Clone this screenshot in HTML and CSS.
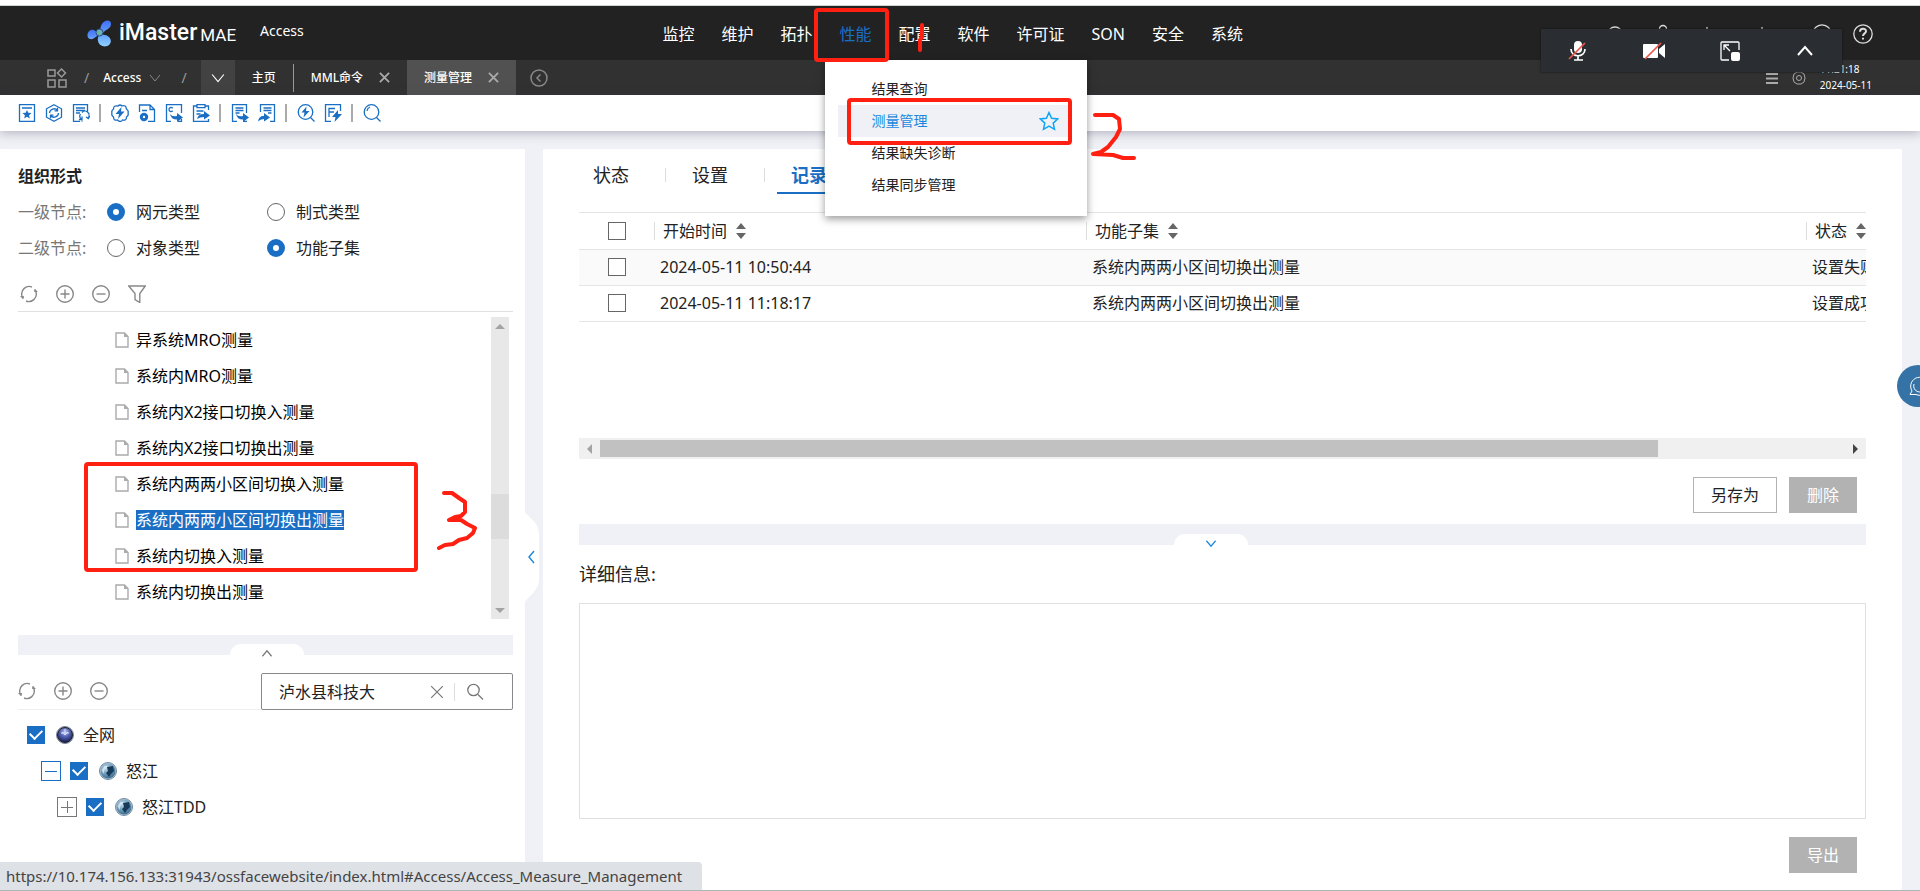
FILE: index.html
```html
<!DOCTYPE html>
<html lang="zh-CN">
<head>
<meta charset="utf-8">
<title>iMaster MAE Access</title>
<link rel="stylesheet" href="styles.css">
</head>
<body>
<svg class="defs" aria-hidden="true">
  <defs>
    <linearGradient id="bladeA" x1="0" y1="0" x2="0" y2="1"><stop offset="0" stop-color="#3f6ff5"/><stop offset="1" stop-color="#6aa2fb"/></linearGradient>
    <linearGradient id="bladeB" x1="0" y1="0" x2="0" y2="1"><stop offset="0" stop-color="#5d97f8"/><stop offset="1" stop-color="#8fd0ff"/></linearGradient>
    <radialGradient id="globeA" cx=".5" cy=".3" r=".7"><stop offset="0" stop-color="#b9c3ec"/><stop offset=".45" stop-color="#5664b4"/><stop offset="1" stop-color="#141b52"/></radialGradient>
    <radialGradient id="globeB" cx=".4" cy=".3" r=".8"><stop offset="0" stop-color="#c4dbea"/><stop offset=".5" stop-color="#6d9cbc"/><stop offset="1" stop-color="#2f5c80"/></radialGradient>
    <symbol id="refresh" viewBox="0 0 18 18"><path d="M2 11A7.500 7.500 0 0 1 12 2M16 7A7.500 7.500 0 0 1 6 16M3.500 13.500A7.500 7.500 0 0 1 2 11M14.500 4.500A7.500 7.500 0 0 1 16 7"/><path class="fill" d="M0 11h4l-1 3zM18 7h-4l1-3z"/></symbol>
    <symbol id="plus" viewBox="0 0 18 18"><circle cx="9" cy="9" r="8.300"/><path d="M4.500 9h9M9 4.500v9"/></symbol>
    <symbol id="minus" viewBox="0 0 18 18"><circle cx="9" cy="9" r="8.300"/><path d="M4.500 9h9"/></symbol>
    <symbol id="file" viewBox="0 0 14 16"><path d="M1 1h8.500L13 4.500V15H1z"/><path class="fill" d="M9 1v4h4z"/></symbol>
    <symbol id="close" viewBox="0 0 12 12"><path d="M1 1l10 10M11 1L1 11"/></symbol>
    <symbol id="down" viewBox="0 0 12 12"><path d="M1 3l5 6 5-6"/></symbol>
    <symbol id="sort" viewBox="0 0 10 16"><path class="fill" d="M0 6l5-6 5 6zM0 10l5 6 5-6z"/></symbol>
    <symbol id="globe" viewBox="0 0 18 18"><circle cx="9" cy="9" r="8.500" fill="#b9cbd8" stroke="#6f8ca3"/><circle cx="9" cy="9" r="7.500" fill="url(#globeB)" stroke="none"/><path d="M8 5l6-1 1 5-3 3-2 3-3-4 2-2z" fill="#173a58" stroke="none"/><path d="M2.500 8l3-4 3 0-3 4-1 4z" fill="#e4f1f8" stroke="none" opacity=".7"/></symbol>
  </defs>
</svg>

<div class="app">
  <header class="topbar">
    <div class="brand">
      <svg class="logo" viewBox="0 0 24 27"><path d="M11 12c3-2 2-5 4-8 2-4 9-5 9 0 0 4-4 5-6 7-2 1-3 4-5 4z" fill="url(#bladeA)"/><path d="M12 12c-3 1-4-3-8-2-4 1-5 8-1 9 4 1 5-3 10-4z" fill="url(#bladeA)"/><path d="M12 12c1 3-2 5-1 9 1 5 7 7 11 4 4-4 1-9-4-10-2 0-4-1-6-3z" fill="url(#bladeB)"/><circle cx="12.500" cy="12.500" r="3.500" fill="#67b3a6" stroke="#2b4a8c"/></svg>
      <span class="brand-name">iMaster</span><span class="brand-sub">MAE</span>
      <span class="product">Access</span>
    </div>
    <nav class="nav">
      <a href="#monitor">监控</a>
      <a href="#maintain">维护</a>
      <a href="#topology">拓扑</a>
      <div class="nav-open">
        <a class="current" href="#performance">性能</a>
        <div class="menu">
          <a href="#query">结果查询</a>
          <a class="active" href="#measure">测量管理<svg class="star" viewBox="0 0 20 20"><path d="M10 1.500l2.600 5.700 6.200.7-4.600 4.200 1.300 6.200L10 15.200l-5.500 3.100 1.300-6.200L1.200 7.900l6.200-.7z"/></svg></a>
          <a href="#missing">结果缺失诊断</a>
          <a href="#sync">结果同步管理</a>
        </div>
      </div>
      <a href="#config">配置</a>
      <a href="#software">软件</a>
      <a href="#license">许可证</a>
      <a href="#son">SON</a>
      <a href="#security">安全</a>
      <a href="#system">系统</a>
    </nav>
    <div class="tools">
      <svg viewBox="0 0 20 20"><circle cx="10" cy="10" r="7"/></svg>
      <svg viewBox="0 0 20 20"><circle cx="10" cy="5" r="3.500"/><path d="M3 18c0-9 14-9 14 0"/></svg>
      <svg viewBox="0 0 20 20"><path d="M10 3v14M3 10h14"/></svg>
      <svg viewBox="0 0 20 20"><path d="M10 3v14M3 10h14"/></svg>
      <svg viewBox="0 0 20 20"><circle cx="10" cy="10" r="9.200"/></svg>
      <svg class="help" viewBox="0 0 20 20"><circle cx="10" cy="10" r="9.200"/><path d="M7 7.800c0-4 6-4 6-.6 0 2.200-3 2.200-3 4.800M10 13.800v1.800" stroke-width="2"/></svg>
    </div>
  </header>

  <div class="tabbar">
    <svg class="apps" viewBox="0 0 20 20"><path d="M1 2h7v6H1zM14.500 1l4 4-4 4-4-4zM1 12h7v7H1zM12 12h7v7h-7z"/></svg>
    <span class="slash">/</span>
    <a class="crumb" href="#access">Access<svg><use href="#down"/></svg></a>
    <span class="slash last">/</span>
    <button class="tab-list" aria-label="标签列表"><svg><use href="#down"/></svg></button>
    <a class="tab home" href="#home">主页</a>
    <div class="tab"><a href="#mml">MML命令</a><button aria-label="关闭"><svg><use href="#close"/></svg></button></div>
    <div class="tab on"><a href="#mm">测量管理</a><button aria-label="关闭"><svg><use href="#close"/></svg></button></div>
    <button class="back" aria-label="后退"><svg viewBox="0 0 18 18"><circle cx="9" cy="9" r="8"/><path d="M10.500 5.500L7 9l3.500 3.500"/></svg></button>
    <div class="session">
      <svg class="list" viewBox="0 0 12 12"><path d="M0 2h12M0 6.500h12M0 11h12"/></svg>
      <svg class="gear" viewBox="0 0 14 14"><path d="M5 1h4l3 2 1 4-1 4-3 2H5l-3-2-1-4 1-4z"/><circle cx="7" cy="7" r="2.500"/></svg>
      <div class="clock"><span>11:21:18</span><span>2024-05-11</span></div>
    </div>
  </div>

  <div class="toolbar">
    <button aria-label="收藏"><svg viewBox="0 0 18 18"><path d="M1.500.7h15v16.600h-15zM4 4h10"/><path class="fill" d="M9 6l1.300 2.800 3.200.3-2.400 2.200.7 3.200L9 12.800l-2.800 1.700.7-3.200-2.400-2.200 3.200-.3z"/></svg></button>
    <button aria-label="同步"><svg viewBox="0 0 18 18"><path d="M9 .8l7.500 4v8.400L9 17.200l-7.500-4V4.800zM4.500 9a4.500 4.500 0 0 1 8-2.500M13.500 9a4.500 4.500 0 0 1-8 2.500M12.500 3.800v3h-3M5.500 14.200v-3h3"/></svg></button>
    <button aria-label="刷新记录"><svg viewBox="0 0 18 18"><path d="M8 17.300H1.500V.7h14V8M4 4h9M4 6.500h9M4 9h4M9 15a4 4 0 0 1-.5-5M10 8.500a4 4 0 0 1 6 5.500M9.500 17a4 4 0 0 0 1 0M7 15.500h3v-3M17.800 12l-1.500 2.500L14 13"/></svg></button>
    <i></i>
    <button aria-label="快速设置"><svg viewBox="0 0 18 18"><path d="M7 2q2-2 4 0 3-1 4 1 0 1 .5 2 2.500 2 1.500 4 1 2-1.500 4 0 4-4 3-2 3-5 0-4 1-4-3-2.500-2-1.500-4-1-2 1.500-4 0-4 4.500-3z"/><path class="fill" d="M10.500 3L4.500 10h3.500l-1 5 6.500-7.500H10z"/></svg></button>
    <button aria-label="任务设置"><svg viewBox="0 0 18 18"><path d="M1.500 8V1H12l4.500 4.500v11.800H10M12 1v4.500h4.500M4 6.500h5"/><circle cx="6" cy="13" r="2.700" stroke-width="3"/></svg></button>
    <button aria-label="导出C"><svg viewBox="0 0 18 18"><path d="M6 17.300H1.500V.7h15V9M16.500 15v2.300H13M8 4Q4 2.500 4 5.500T8 7"/><path class="fill" d="M5 10q2 3 7 2v-3l6 4.500-6 4.500v-2.500q-6 0-7-5.500z"/></svg></button>
    <button aria-label="任务转移"><svg viewBox="0 0 18 18"><path d="M4.500 2h-3v15.300h15V15M13.500 2h3v4M5 .7h8v3H5zM4.500 7h7M4.500 10h4"/><path class="fill" d="M5 15q1-5 7-5V7l6 4.500-6 4V13q-4 0-7 2z"/></svg></button>
    <i></i>
    <button aria-label="导出"><svg viewBox="0 0 18 18"><path d="M6 17.300H1.500V.7h14V9M4.500 4h8M4.500 6.500h8M4.500 9h4M12 17.300h4"/><path class="fill" d="M5 10q2 3 7 2v-3l6 4.500-6 4.500v-2.500q-6 0-7-5.500z"/></svg></button>
    <button aria-label="导入"><svg viewBox="0 0 18 18"><path d="M2.500 8V.7h14v16.600H12M5.500 4h8M5.500 6.500h8M10 9h3.500"/><path class="fill" d="M0 17.500q1-6 6-5.500V9l6 4.500-6 4V15q-4 0-6 2.500z"/></svg></button>
    <i></i>
    <button aria-label="快速查询"><svg viewBox="0 0 18 18"><circle cx="8.500" cy="8" r="7.300"/><path d="M13.500 13.500l4 4"/><path class="fill" d="M9.500 2.500l-5 6h3l-1 5 6-6.500H9z"/></svg></button>
    <button aria-label="功能"><svg viewBox="0 0 18 18"><path d="M7 17.300H1.500V.7h15V7M5 13V4.500h6M5 8h5"/><path class="fill" d="M14 6l-6 7h3.500l-1 5 7.500-8h-4z"/></svg></button>
    <i></i>
    <button aria-label="搜索"><svg viewBox="0 0 18 18"><circle cx="8.500" cy="8" r="7.300"/><path d="M13.500 13.500l4 4M4 7a5 5 0 0 1 3-4"/></svg></button>
  </div>

  <main class="workspace">
    <aside class="side">
      <h2>组织形式</h2>
      <div class="choice"><span>一级节点:</span>
        <label><input type="radio" name="l1" checked>网元类型</label>
        <label><input type="radio" name="l1">制式类型</label></div>
      <div class="choice"><span>二级节点:</span>
        <label><input type="radio" name="l2">对象类型</label>
        <label><input type="radio" name="l2" checked>功能子集</label></div>
      <div class="icons top">
        <button aria-label="刷新"><svg><use href="#refresh"/></svg></button>
        <button aria-label="展开"><svg><use href="#plus"/></svg></button>
        <button aria-label="收起"><svg><use href="#minus"/></svg></button>
        <button aria-label="过滤"><svg viewBox="0 0 18 18"><path d="M.7 1h16.600l-5.500 7.500v9L7 14.500v-6z"/></svg></button>
      </div>
      <div class="list-area">
        <ul>
          <li><svg><use href="#file"/></svg><span>异系统MRO测量</span></li>
          <li><svg><use href="#file"/></svg><span>系统内MRO测量</span></li>
          <li><svg><use href="#file"/></svg><span>系统内X2接口切换入测量</span></li>
          <li><svg><use href="#file"/></svg><span>系统内X2接口切换出测量</span></li>
          <li><svg><use href="#file"/></svg><span>系统内两两小区间切换入测量</span></li>
          <li><svg><use href="#file"/></svg><span class="selected">系统内两两小区间切换出测量</span></li>
          <li><svg><use href="#file"/></svg><span>系统内切换入测量</span></li>
          <li><svg><use href="#file"/></svg><span>系统内切换出测量</span></li>
        </ul>
        <div class="vscroll"><b class="up"></b><div class="vthumb"></div><b class="dn"></b></div>
      </div>
      <div class="splitter"><button class="grip up" aria-label="收起"><svg><use href="#down"/></svg></button></div>
      <div class="search-row">
        <div class="icons">
          <button aria-label="刷新"><svg><use href="#refresh"/></svg></button>
          <button aria-label="展开"><svg><use href="#plus"/></svg></button>
          <button aria-label="收起"><svg><use href="#minus"/></svg></button>
        </div>
        <div class="search">
          <input type="text" aria-label="搜索" value="泸水县科技大">
          <button aria-label="清除"><svg><use href="#close"/></svg></button>
          <i></i>
          <button aria-label="查找"><svg viewBox="0 0 18 18"><circle cx="7.500" cy="7" r="5.700"/><path d="M12 11.500l5 5"/></svg></button>
        </div>
      </div>
      <div class="tree">
        <div class="node n1"><label><input type="checkbox" checked><svg viewBox="0 0 18 18"><circle cx="9" cy="9" r="8.500" fill="#b4bace" stroke="#777f9a"/><circle cx="9" cy="9" r="7.500" fill="url(#globeA)"/><path d="M9 3v5M6 6l3 3 3-3M5 7h8" stroke="#d7defa" fill="none"/></svg>全网</label></div>
        <div class="node n2"><button class="exp open" aria-label="折叠"></button><label><input type="checkbox" checked><svg><use href="#globe"/></svg>怒江</label></div>
        <div class="node n3"><button class="exp" aria-label="展开"></button><label><input type="checkbox" checked><svg><use href="#globe"/></svg>怒江TDD</label></div>
      </div>
      <button class="collapse" aria-label="收起面板"><svg viewBox="0 0 14 90"><path class="tabshape" d="M0 0c3 5 14 10 14 22v46c0 10-11 17-14 22z"/><path class="arrow" d="M9 39l-5 6 5 6"/></svg></button>
    </aside>

    <section class="content">
      <div class="tabs"><button>状态</button><i></i><button>设置</button><i></i><button class="on">记录</button></div>
      <div class="grid">
        <table>
          <colgroup><col class="c1"><col class="c2"><col class="c3"><col></colgroup>
          <thead><tr><th><input type="checkbox" aria-label="全选"></th><th><span>开始时间<svg><use href="#sort"/></svg></span></th><th><span>功能子集<svg><use href="#sort"/></svg></span></th><th><span>状态<svg><use href="#sort"/></svg></span></th></tr></thead>
          <tbody>
            <tr><td><input type="checkbox" aria-label="选择"></td><td>2024-05-11 10:50:44</td><td>系统内两两小区间切换出测量</td><td>设置失败</td></tr>
            <tr><td><input type="checkbox" aria-label="选择"></td><td>2024-05-11 11:18:17</td><td>系统内两两小区间切换出测量</td><td>设置成功</td></tr>
          </tbody>
        </table>
      </div>
      <div class="hscroll"><b class="lf"></b><div class="htrack"><div class="hthumb"></div></div><b class="rt"></b></div>
      <div class="actions"><button class="plain">另存为</button><button disabled>删除</button></div>
      <div class="splitter"><button class="grip" aria-label="收起"><svg><use href="#down"/></svg></button></div>
      <label class="detail-label" for="detail">详细信息:</label>
      <textarea id="detail"></textarea>
      <div class="actions end"><button disabled>导出</button></div>
    </section>
  </main>
</div>

<div class="meeting">
  <button aria-label="麦克风"><svg viewBox="0 0 20 20"><rect class="fill" x="6" y="0" width="8" height="12" rx="4"/><path d="M3 8c0 9 14 9 14 0M10 15v4M6 19h9"/><path class="off" d="M1 18L17 2"/></svg></button>
  <button aria-label="摄像头"><svg class="cam" viewBox="0 0 22 20"><path class="fill" d="M0 4q0-1 1-1h13q1 0 1 1v12q0 1-1 1H1q-1 0-1-1zM16 8l6-5v14l-6-5z"/><path class="off" d="M2 18L18 2"/></svg></button>
  <button aria-label="共享"><svg viewBox="0 0 20 20"><path d="M19 9V2q0-1-1-1H2Q1 1 1 2v16q0 1 1 1h7M4 9V4h5M4.500 4.500L10 10" stroke-width="1.300"/><rect class="fill" x="11" y="11" width="9" height="9" rx="2"/></svg></button>
  <button aria-label="收起"><svg viewBox="0 0 20 20"><path d="M3 14l7-8 7 8" stroke-width="2"/></svg></button>
</div>
<button class="assist" aria-label="助手"><svg viewBox="0 0 20 20"><path d="M3 15a9 9 0 1 1 4 3.500H1l2-3.500M5 8a6 6 0 1 0 9-3"/></svg></button>
<div class="status">https://10.174.156.133:31943/ossfacewebsite/index.html#Access/Access_Measure_Management</div>

<svg class="marks" aria-hidden="true">
  <rect x="816" y="10" width="71" height="50" rx="2"/>
  <path d="M922 25v12l-2 3v10"/>
  <rect x="849" y="100" width="221" height="43" rx="2"/>
  <path d="M1095 115h18l6 4 1 10-4 8-8 10-7 5-8 2 20 1 10 3h11"/>
  <rect x="86" y="464" width="330" height="106" rx="2"/>
  <path d="M444 493h8l7 5 6 4v10l-4 4-6 1-6 3h12l6 4 8 4-2 5-6 5-8 2-6 4-8 1-6 3"/>
</svg>
</body>
</html>
```

FILE: styles.css
```css
* { box-sizing: border-box; }
body {
  margin: 0;
  font-family: "Noto Sans", "Noto Sans CJK SC", sans-serif;
  font-size: 16px;
  line-height: 20px;
  color: #222;
  background: #fff;
  overflow: hidden;
}
a { color: inherit; text-decoration: none; }
button {
  border: 0;
  padding: 0;
  background: none;
  font: inherit;
  color: inherit;
}
svg { display: block; flex: none; fill: none; stroke: currentColor; }
svg .fill { fill: currentColor; stroke: none; }
.defs { position: absolute; width: 0; height: 0; }

.app {
  display: flex;
  flex-direction: column;
  min-height: 100vh;
  border-bottom: 1px solid #a9b8b6;
}

/* Header */
.topbar {
  display: flex;
  height: 55px;
  margin-top: 5px;
  border-top: 1px solid #ccd6d2;
  background: #222;
  color: #fff;
}
.brand {
  display: flex;
  align-items: center;
  width: 34.5%;
  padding-left: 87px;
}
.logo { width: 24px; height: 27px; margin-right: 8px; stroke: none; }
.brand-name { font: 500 23px/28px Roboto, sans-serif; }
.brand-sub { margin: 4px 24px 0 3px; font: 400 17px/24px Roboto, sans-serif; }
.product { font-size: 14px; padding-bottom: 4px; }
.nav { display: flex; gap: 27px; line-height: 56px; }
.nav > a { display: block; }
.nav-open { position: relative; }
.nav-open .current { color: #1a6fc4; }
.menu {
  position: absolute;
  z-index: 5;
  top: 54px;
  left: -14px;
  width: 262px;
  height: 156px;
  padding: 13px 16px 0 13px;
  background: #fff;
  box-shadow: 0 3px 8px rgba(0, 0, 0, .4);
  color: #222;
  font-size: 14px;
  line-height: 32px;
}
.menu a {
  display: flex;
  align-items: center;
  justify-content: space-between;
  padding: 0 12px 0 33px;
}
.menu .active { background: #f0f1f6; color: #1a87dc; }
.star { width: 20px; height: 20px; stroke: #0ea5f5; stroke-width: 1.500; }
.tools {
  display: grid;
  grid-template-columns: 48px 44px 55px 60px 41px 20px;
  align-items: center;
  margin-left: auto;
  padding: 2px 47px 0 0;
  color: #ddd;
}
.tools svg { width: 20px; height: 20px; stroke-width: 1.300; }

/* Tabs */
.tabbar {
  display: flex;
  align-items: center;
  height: 35px;
  padding-left: 47px;
  background: #313131;
  color: #fff;
  font-size: 12px;
}
.apps { width: 20px; height: 20px; color: #999; stroke-width: 1.500; margin-right: 17px; }
.slash { color: #999; font-size: 14px; }
.slash.last { margin-right: 14px; }
.crumb { display: flex; align-items: center; gap: 8px; margin: 0 20px 0 14px; font-weight: 500; }
.crumb svg { width: 12px; height: 12px; color: #888; }
.tab-list {
  display: grid;
  place-items: center;
  width: 34px;
  height: 35px;
  background: #424242;
}
.tab-list svg { width: 14px; height: 14px; }
.tab {
  display: flex;
  align-items: center;
  gap: 16px;
  height: 35px;
  padding: 0 17px;
  font-weight: 500;
}
.tab.home { height: 28px; border-right: 1px solid #999; }
.tab svg { width: 11px; height: 11px; color: #aaa; stroke-width: 2; }
.tab.on { background: #515151; }
.back { margin-left: 14px; color: #888; }
.back svg { width: 18px; height: 18px; stroke-width: 1.500; }
.session { display: flex; align-items: center; margin-left: auto; padding-right: 48px; color: #aaa; }
.session .list { width: 12px; height: 12px; stroke-width: 2; margin-right: 14px; }
.session .gear { width: 14px; height: 14px; margin-right: 14px; }
.clock { display: grid; padding-bottom: 2px; color: #fff; font-size: 10px; line-height: 16px; }

/* Toolbar */
.toolbar {
  position: relative;
  display: flex;
  align-items: center;
  gap: 9px;
  height: 36px;
  padding-left: 18px;
  color: #1a6fc4;
  background: #fff;
  box-shadow: 0 2px 10px rgba(60, 60, 90, .35);
}
.toolbar svg { width: 18px; height: 18px; stroke-width: 1.300; }
.toolbar i { width: 2px; height: 18px; margin: 0 1px 0 0; background: #aaa; }

/* Page */
.workspace {
  display: flex;
  flex: 1;
  gap: 18px;
  padding: 18px 18px 0 0;
  background: #f0f1f6;
}
.side {
  position: relative;
  display: flex;
  flex-direction: column;
  width: 525px;
  flex: none;
  padding: 0 12px 0 18px;
  background: #fff;
}
.side h2 { margin: 17px 0 8px; font-size: 16px; line-height: 20px; }
.choice { display: flex; align-items: center; height: 36px; }
.choice span { width: 89px; color: #777; }
.choice label { display: flex; align-items: center; gap: 11px; width: 160px; }
input[type="radio"], input[type="checkbox"] {
  appearance: none;
  flex: none;
  width: 18px;
  height: 18px;
  margin: 0;
  border: 1px solid #666;
  background: #fff;
}
input[type="radio"] { border-radius: 50%; }
input[type="radio"]:checked { border: 6px solid #1a6fc4; }
input[type="checkbox"]:checked { display: grid; place-items: center; border: 0; background: #1a6fc4; }
input[type="checkbox"]:checked::before {
  content: "";
  width: 10px;
  height: 6px;
  margin-bottom: 4px;
  border: solid #fff;
  border-width: 0 0 2px 2px;
  transform: rotate(-45deg);
}
.icons { display: flex; align-items: center; gap: 18px; color: #888; }
.icons svg { width: 18px; height: 18px; stroke-width: 1.400; }
.icons.top {
  align-items: flex-start;
  height: 27px;
  margin-top: 19px;
  padding-left: 2px;
  border-bottom: 1px solid #e0e0e0;
}
.list-area { display: flex; justify-content: space-between; height: 307px; padding: 5px 4px 0 0; }
.list-area ul { margin: 0; padding: 5px 0 0 97px; list-style: none; color: #000; }
.list-area li { display: flex; align-items: center; gap: 7px; height: 36px; }
.list-area li svg { width: 14px; height: 16px; color: #aaa; stroke-width: 1.400; }
.list-area .selected { background: #1a6fc4; color: #fff; }
.vscroll {
  display: flex;
  flex-direction: column;
  align-items: center;
  width: 18px;
  padding: 7px 0 6px;
  background: #e8e8e8;
}
.vthumb { width: 18px; height: 45px; margin: 165px 0 auto; background: #dcdcdc; }
.vscroll b, .hscroll b { width: 0; height: 0; border: 5px solid transparent; }
.vscroll .up { border-top: 0; border-bottom-color: #a3a3a3; }
.vscroll .dn { border-bottom: 0; border-top-color: #a3a3a3; }
.hscroll .lf { border-left: 0; border-right-color: #a3a3a3; }
.hscroll .rt { border-right: 0; border-left-color: #444; }
.splitter {
  display: flex;
  align-items: flex-end;
  justify-content: center;
  height: 21px;
  padding-right: 24px;
  background: #f0f1f6;
}
.side .splitter { margin-top: 16px; height: 20px; padding: 0 0 0 2px; }
.grip {
  display: grid;
  place-items: center;
  width: 74px;
  height: 11px;
  border-radius: 14px 14px 0 0;
  background: #fff;
  color: #1a87dc;
}
.grip svg { width: 12px; height: 11px; margin-top: 4px; stroke-width: 1.300; }
.grip.up { color: #777; }
.grip.up svg { transform: rotate(180deg); }
.search-row {
  display: flex;
  justify-content: space-between;
  height: 55px;
  padding-top: 18px;
  border-bottom: 1px solid #eee;
}
.search {
  display: flex;
  align-items: center;
  width: 252px;
  height: 37px;
  padding: 0 28px 0 17px;
  border: 1px solid #888;
  border-radius: 2px;
  background: #fff;
  color: #777;
}
.search input { flex: 1; min-width: 0; border: 0; padding: 0; outline: 0; font: inherit; color: #222; }
.search i { width: 1px; height: 18px; margin: 0 11px 0 10px; background: #ddd; }
.search svg { width: 14px; height: 14px; }
.search i + button svg { width: 18px; height: 18px; stroke-width: 1.300; }
.tree { padding-top: 7px; }
.node, .node label { display: flex; align-items: center; }
.node { height: 36px; }
.node label svg { width: 18px; height: 18px; margin: 0 9px 0 11px; stroke-width: 1; }
.n1 { padding-left: 9px; }
.n2 { padding-left: 23px; }
.n3 { padding-left: 39px; }
.exp {
  width: 20px;
  height: 20px;
  margin-right: 9px;
  border: 1px solid #777;
  background: linear-gradient(#777, #777) center / 12px 1px no-repeat, linear-gradient(#777, #777) center / 1px 12px no-repeat;
}
.exp.open { border-color: #1a6fc4; background: linear-gradient(#1a6fc4, #1a6fc4) center / 12px 1px no-repeat; }
.collapse { position: absolute; left: 100%; top: 363px; color: #1a87dc; }
.collapse svg { width: 14px; height: 90px; stroke-width: 1.400; }
.tabshape { fill: #fff; stroke: none; }

.content {
  display: flex;
  flex-direction: column;
  flex: 1;
  min-width: 0;
  padding: 0 36px 17px;
  background: #fff;
  border-radius: 2px;
}
.tabs { display: flex; align-items: center; height: 45px; margin-bottom: 18px; padding-top: 6px; font-size: 18px; }
.tabs button { height: 39px; padding: 0 14px; }
.tabs button.on { border-bottom: 2px solid #1a6fc4; border-top: 2px solid transparent; color: #1a6fc4; font-weight: 700; }
.tabs i { width: 1px; height: 14px; margin: 0 12px 0 22px; background: #ddd; }
.grid { height: 226px; overflow: hidden; border-top: 1px solid #e4e4e4; }
table { width: 1560px; table-layout: fixed; border-collapse: collapse; }
.c1 { width: 75px; }
.c2 { width: 432px; }
.c3 { width: 720px; }
th, td { height: 36px; padding: 0 6px; border-bottom: 1px solid #e4e4e4; text-align: left; font-weight: 400; white-space: nowrap; }
th { padding: 0; }
th:first-child, td:first-child { padding: 0 0 0 29px; }
th input, td input { display: block; }
th span { display: flex; align-items: center; gap: 9px; height: 18px; padding-left: 8px; border-left: 1px solid #ddd; }
th svg { width: 10px; height: 16px; color: #666; }
tbody tr:first-child { background: #fafafa; }
.hscroll { display: flex; align-items: center; height: 21px; padding: 0 8px; background: #f0f0f0; }
.htrack { flex: 1; margin: 0 8px; }
.hthumb { width: 85%; height: 17px; background: #c1c1c1; }
.actions { display: flex; justify-content: flex-end; gap: 12px; padding: 18px 9px 11px 0; }
.actions button { height: 36px; padding: 0 17px; border: 1px solid #b2b2b2; background: #b2b2b2; color: #fff; }
.actions .plain { background: #fff; color: #222; }
.detail-label { margin: 19px 0; font-size: 18px; line-height: 20px; }
textarea { flex: 1; width: 100%; border: 1px solid #e0e0e0; resize: none; outline: 0; }
.actions.end { padding-bottom: 0; }

/* Floating parts */
.meeting {
  position: absolute;
  z-index: 6;
  top: 29px;
  right: 78px;
  display: flex;
  justify-content: space-around;
  align-items: center;
  width: 301px;
  height: 43px;
  background: #2a2d32;
  box-shadow: 0 0 2px #111;
  color: #fff;
}
.meeting svg { width: 20px; height: 20px; stroke-width: 1.700; }
.meeting .cam { width: 22px; }
.meeting .off { stroke: #e8554a; }
.assist {
  position: absolute;
  right: -19px;
  top: 365px;
  width: 42px;
  height: 42px;
  padding-left: 12px;
  border-radius: 50%;
  background: #3573a6;
  color: #fff;
}
.assist svg { width: 20px; height: 20px; }
.status {
  position: absolute;
  left: 0;
  bottom: 1px;
  height: 28px;
  padding: 0 20px 0 6px;
  border-radius: 0 4px 0 0;
  background: #dee1e6;
  color: #444;
  font-size: 15px;
  line-height: 29px;
}
.marks {
  position: absolute;
  z-index: 8;
  left: 0;
  top: 0;
  width: 100%;
  height: 100%;
  stroke: #ff2012;
  stroke-width: 4;
  stroke-linecap: round;
  stroke-linejoin: round;
  pointer-events: none;
}
```
